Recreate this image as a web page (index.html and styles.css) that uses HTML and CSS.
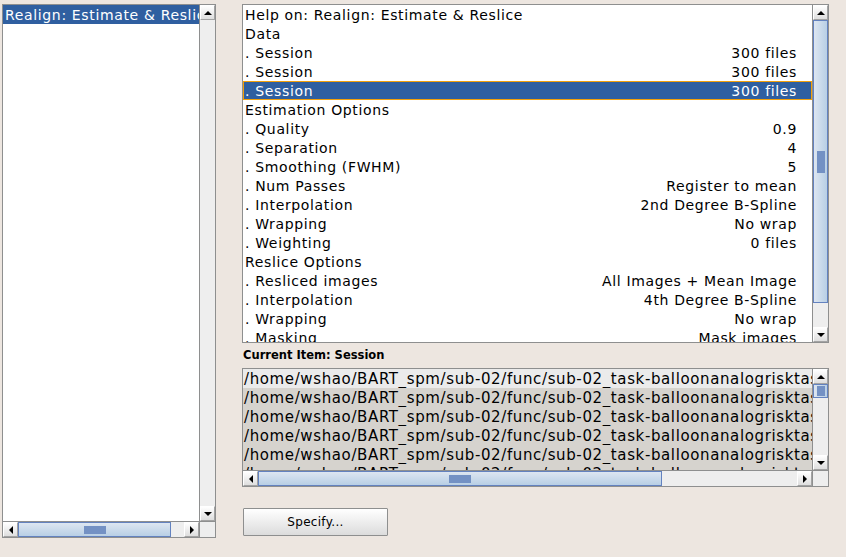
FILE: index.html
```html
<!DOCTYPE html>
<html>
<head>
<meta charset="utf-8">
<link rel="stylesheet" href="styles.css">
</head>
<body>
<div class="page">
  <div class="box left-box">
    <div class="list-area">
      <div class="row sel">Realign: Estimate &amp; Reslice</div>
    </div>
    <div class="vscroll">
      <div class="sbtn"><span class="tri up"></span></div>
      <div class="track"></div>
      <div class="sbtn"><span class="tri down"></span></div>
    </div>
    <div class="hscroll">
      <div class="sbtn"><span class="tri lt"></span></div>
      <div class="hthumb left-thumb"><span class="grip"></span></div>
      <div class="track"></div>
      <div class="sbtn"><span class="tri rt"></span></div>
    </div>
    <div class="corner"></div>
  </div>

  <div class="right-col">
    <div class="box help-box">
      <div class="list-area">
        <div class="row"><span>Help on: Realign: Estimate &amp; Reslice</span></div>
        <div class="row"><span>Data</span></div>
        <div class="row"><span>. Session</span><span>300 files</span></div>
        <div class="row"><span>. Session</span><span>300 files</span></div>
        <div class="row sel focus"><span>. Session</span><span>300 files</span></div>
        <div class="row"><span>Estimation Options</span></div>
        <div class="row"><span>. Quality</span><span>0.9</span></div>
        <div class="row"><span>. Separation</span><span>4</span></div>
        <div class="row"><span>. Smoothing (FWHM)</span><span>5</span></div>
        <div class="row"><span>. Num Passes</span><span>Register to mean</span></div>
        <div class="row"><span>. Interpolation</span><span>2nd Degree B-Spline</span></div>
        <div class="row"><span>. Wrapping</span><span>No wrap</span></div>
        <div class="row"><span>. Weighting</span><span>0 files</span></div>
        <div class="row"><span>Reslice Options</span></div>
        <div class="row"><span>. Resliced images</span><span>All Images + Mean Image</span></div>
        <div class="row"><span>. Interpolation</span><span>4th Degree B-Spline</span></div>
        <div class="row"><span>. Wrapping</span><span>No wrap</span></div>
        <div class="row"><span>. Masking</span><span>Mask images</span></div>
      </div>
      <div class="vscroll">
        <div class="sbtn"><span class="tri up"></span></div>
        <div class="vthumb help-thumb"><span class="grip vgrip"></span></div>
        <div class="track"></div>
        <div class="sbtn"><span class="tri down"></span></div>
      </div>
    </div>

    <div class="cur-label">Current Item: Session</div>

    <div class="box path-box">
      <div class="list-area">
        <div class="prow first">/home/wshao/BART_spm/sub-02/func/sub-02_task-balloonanalogrisktask_run-01_bold.nii,1</div>
        <div class="prow">/home/wshao/BART_spm/sub-02/func/sub-02_task-balloonanalogrisktask_run-01_bold.nii,2</div>
        <div class="prow">/home/wshao/BART_spm/sub-02/func/sub-02_task-balloonanalogrisktask_run-01_bold.nii,3</div>
        <div class="prow">/home/wshao/BART_spm/sub-02/func/sub-02_task-balloonanalogrisktask_run-01_bold.nii,4</div>
        <div class="prow">/home/wshao/BART_spm/sub-02/func/sub-02_task-balloonanalogrisktask_run-01_bold.nii,5</div>
        <div class="prow">/home/wshao/BART_spm/sub-02/func/sub-02_task-balloonanalogrisktask_run-01_bold.nii,6</div>
      </div>
      <div class="vscroll">
        <div class="sbtn"><span class="tri up"></span></div>
        <div class="vthumb path-vthumb"><span class="grip vgrip small"></span></div>
        <div class="track"></div>
        <div class="sbtn"><span class="tri down"></span></div>
      </div>
      <div class="hscroll">
        <div class="sbtn"><span class="tri lt"></span></div>
        <div class="hthumb path-hthumb"><span class="grip"></span></div>
        <div class="track"></div>
        <div class="sbtn"><span class="tri rt"></span></div>
      </div>
      <div class="corner"></div>
    </div>

    <div class="btn-row">
      <button class="specify">Specify...</button>
    </div>
  </div>
</div>
</body>
</html>
```

FILE: styles.css
```css
html, body {
  margin: 0;
  padding: 0;
  background: #ede6e0;
  width: 846px;
  height: 557px;
  overflow: hidden;
  font-family: "DejaVu Sans", sans-serif;
  font-size: 14px;
  color: #000;
}

.page {
  display: flex;
  padding: 4px 0 0 2px;
  gap: 26px;
}

.box {
  border: 1px solid #8e8f8f;
  background: #fff;
  display: grid;
  box-sizing: border-box;
}

.left-box {
  width: 214px;
  height: 534px;
  grid-template-columns: 1fr 16px;
  grid-template-rows: 1fr 16px;
}

.list-area {
  overflow: hidden;
  min-width: 0;
  min-height: 0;
}

.row {
  height: 19px;
  line-height: 20px;
  display: flex;
  justify-content: space-between;
  padding: 0 15px 0 2px;
  white-space: nowrap;
  box-sizing: border-box;
  letter-spacing: 0.65px;
}

.left-box .row {
  padding: 0 0 0 2px;
  overflow: hidden;
}

.row.sel {
  background: #2f5fa0;
  color: #fff;
}

.row.focus {
  border: 1px solid #f2a00a;
  padding-left: 1px;
  padding-right: 14px;
  line-height: 18px;
}

/* scrollbars */
.vscroll {
  display: flex;
  flex-direction: column;
  background: #eeeeee;
  border-left: 1px solid #8e8f8f;
}

.hscroll {
  display: flex;
  background: #eeeeee;
  border-top: 1px solid #8e8f8f;
}

.corner {
  background: #eeeeee;
  border-top: 1px solid #8e8f8f;
  border-left: 1px solid #8e8f8f;
}

.sbtn {
  flex: 0 0 15px;
  height: 15px;
  width: 15px;
  box-sizing: border-box;
  background: linear-gradient(#ffffff, #dedede);
  border: 1px solid #a3a3a3;
  border-top-color: #ffffff;
  border-left-color: #ffffff;
  display: flex;
  align-items: center;
  justify-content: center;
}

.track {
  flex: 1;
  background: #eeeeee;
}

.tri {
  width: 0;
  height: 0;
  display: block;
}
.tri.up {
  border-left: 4px solid transparent;
  border-right: 4px solid transparent;
  border-bottom: 4px solid #000;
}
.tri.down {
  border-left: 4px solid transparent;
  border-right: 4px solid transparent;
  border-top: 4px solid #000;
}
.tri.lt {
  border-top: 4px solid transparent;
  border-bottom: 4px solid transparent;
  border-right: 4px solid #000;
}
.tri.rt {
  border-top: 4px solid transparent;
  border-bottom: 4px solid transparent;
  border-left: 4px solid #000;
}

.hthumb, .vthumb {
  box-sizing: border-box;
  border: 1px solid #6382bf;
  display: flex;
  align-items: center;
  justify-content: center;
}
.hthumb {
  background: linear-gradient(#dde6f1, #b8cfe5);
}
.vthumb {
  background: linear-gradient(90deg, #dde6f1, #b8cfe5);
}

.grip {
  display: block;
  width: 22px;
  height: 8px;
  background-color: rgba(255,255,255,0.5);
  background-image: radial-gradient(circle, #7391c4 0.9px, transparent 1px);
  background-size: 2px 2px;
}
.vgrip {
  width: 8px;
  height: 22px;
}
.vgrip.small {
  height: 10px;
}

.left-thumb { flex: 0 0 153px; }

.right-col {
  display: flex;
  flex-direction: column;
  width: 587px;
}

.help-box {
  height: 339px;
  grid-template-columns: 1fr 16px;
  overflow: hidden;
}

.help-thumb { flex: 0 0 283px; }

.cur-label {
  font-weight: bold;
  font-size: 11.5px;
  height: 25px;
  line-height: 24px;
  padding-left: 1px;
}

.path-box {
  height: 119px;
  grid-template-columns: 1fr 16px;
  grid-template-rows: 1fr 16px;
  background: #d6d3ce;
}

.prow {
  height: 19px;
  line-height: 20px;
  padding-left: 1px;
  white-space: nowrap;
  overflow: hidden;
  font-size: 15px;
  letter-spacing: 0.62px;
}
.prow.first { background: #ebebeb; }

.path-vthumb { flex: 0 0 14px; }
.path-hthumb { flex: 0 0 404px; }

.btn-row {
  padding: 21px 0 0 1px;
  display: flex;
}

.specify {
  width: 145px;
  height: 28px;
  font-family: "DejaVu Sans", sans-serif;
  font-size: 12px;
  letter-spacing: 0.3px;
  color: #000;
  border: 1px solid #8e8f8f;
  border-radius: 1px;
  background: linear-gradient(#ffffff, #dcdcdc);
  padding: 0;
}
```
